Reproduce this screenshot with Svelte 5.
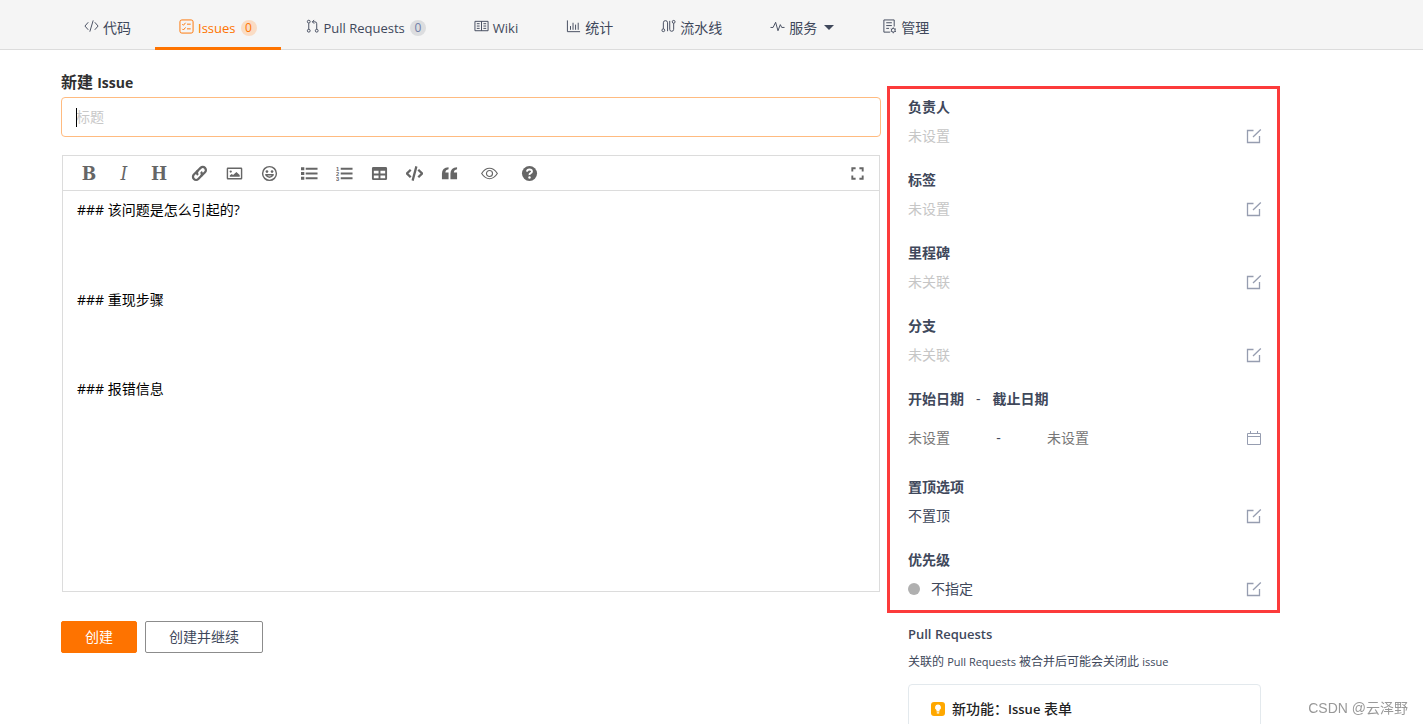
<script>
    let title = '';
    let body = '### 该问题是怎么引起的?\n\n\n\n### 重现步骤\n\n\n\n### 报错信息';

    const tabs = [
        { icon: 'code', text: '代码' },
        { icon: 'issues', text: 'Issues', count: 0, active: true, latin: true },
        { icon: 'pull', text: 'Pull Requests', count: 0, latin: true },
        { icon: 'wiki', text: 'Wiki', latin: true },
        { icon: 'stats', text: '统计' },
        { icon: 'pipeline', text: '流水线' },
        { icon: 'service', text: '服务', caret: true },
        { icon: 'manage', text: '管理' }
    ];

    const tools = [
        ['bold', 'italic', 'heading'],
        ['link', 'image', 'smile'],
        ['ul', 'ol', 'table', 'source', 'quote'],
        ['eye'],
        ['help']
    ];

    const letters = { bold: 'B', italic: 'I', heading: 'H' };

    const fields = [
        { label: '负责人', value: '未设置', empty: true },
        { label: '标签', value: '未设置', empty: true },
        { label: '里程碑', value: '未关联', empty: true },
        { label: '分支', value: '未关联', empty: true },
        { label: '开始日期', range: true },
        { label: '置顶选项', value: '不置顶' },
        { label: '优先级', value: '不指定', dot: true }
    ];
</script>

<div class="page">
    <nav class="tabs">
        {#each tabs as tab}
        <a class="tab" class:active={tab.active} href="#{tab.icon}">
            <svg class="tab-icon" viewBox="0 0 16 16" aria-hidden="true">
                {#if tab.icon === 'code'}
                <path d="M4.500 3.500L1 7.500l3.500 4M11.500 3.500l3.500 4-3.500 4M9.800 1.500L6.200 13.500"/>
                {:else if tab.icon === 'issues'}
                <rect x="1" y="1" width="14" height="14" rx="2"/>
                <path d="M3.500 5.500l1.200 1.200L7 4M8.500 5.500h4M3.500 10.500l1.200 1.200L7 9M8.500 10.500h4"/>
                {:else if tab.icon === 'pull'}
                <circle cx="4" cy="2.800" r="1.500"/><circle cx="4" cy="12.500" r="1.500"/><circle cx="12.500" cy="12.500" r="1.500"/>
                <path d="M4 4.500v6.300M12.500 10.800V5q0-2-2-2H8M9.800 1L7.800 3l2 2"/>
                {:else if tab.icon === 'wiki'}
                <path d="M1 2.500h14v10H1zM8 2.500v10M3 5h3M3 7.500h3M3 10h3M10 5h3M10 7.500h3M10 10h3"/>
                {:else if tab.icon === 'stats'}
                <path d="M1.500 1.500v12H15M4.800 7.500v4M7.500 4v7.500M10.200 6v5.500M13 4v7.500"/>
                {:else if tab.icon === 'pipeline'}
                <circle cx="2.500" cy="12" r="1.500"/><circle cx="13.500" cy="3" r="1.500"/>
                <path d="M2.500 10.500V4a2.250 2.250 0 0 1 4.500 0v9M9.300 2v9a2.100 2.100 0 0 0 4.200 0V4.500"/>
                {:else if tab.icon === 'service'}
                <path d="M.5 9h2.800L6 3.500l2.500 9L11 6l1.500 3h3"/>
                {:else}
                <path d="M8.500 14H2V1h11v7M4.500 4h6M4.500 7h6M4.500 10h3"/>
                <circle cx="12" cy="12" r="2"/><path d="M12 9v1M12 14v1.200M9.300 10.500l1 .5M13.800 13l1 .5M9.300 13.500l1-.5M13.800 11l1-.5"/>
                {/if}
            </svg>
            <span class:latin={tab.latin}>{tab.text}</span>
            {#if tab.count !== undefined}<span class="count">{tab.count}</span>{/if}
            {#if tab.caret}<span class="caret"></span>{/if}
        </a>
        {/each}
    </nav>

    <main class="layout">
        <form class="issue-form" on:submit|preventDefault>
            <h1><label for="title">新建 <span>Issue</span></label></h1>
            <div class="title-box">
                <input id="title" class="title-input" placeholder="标题" autocomplete="off" bind:value={title}>
                <span class="cursor"></span>
            </div>

            <div class="editor">
                <div class="toolbar">
                    {#each tools as group, i}
                    {#if i > 0}<span class="divider"></span>{/if}
                    {#each group as tool}
                    <button type="button" class="tool" aria-label={tool}>
                        {#if letters[tool]}
                        <span class="letter" class:italic={tool === 'italic'}>{letters[tool]}</span>
                        {:else}
                        <svg viewBox="0 0 18 18" aria-hidden="true">
                            {#if tool === 'link'}
                            <g class="line thick" transform="rotate(-45 9 9)">
                                <path d="M10 5.600H4a3.300 3.300 0 0 0 0 6.600h4a3.300 3.300 0 0 0 3.300-3.300"/>
                                <path d="M8 12.200h6a3.300 3.300 0 0 0 0-6.600h-4A3.300 3.300 0 0 0 6.700 9"/>
                            </g>
                            {:else if tool === 'image'}
                            <rect class="line" x="1.500" y="3.500" width="15" height="11" rx=".5"/>
                            <circle cx="5" cy="7" r="1.200"/><path d="M4 12.500v-1.500l2-1.500 1.500 1L11 7.500l3.500 3v2z"/>
                            {:else if tool === 'smile'}
                            <circle class="line" cx="9" cy="9" r="7.300"/>
                            <circle cx="6.300" cy="7" r="1.400"/><circle cx="11.700" cy="7" r="1.400"/>
                            <path class="line" d="M4.500 10.300h9M5 10.300q4 5.200 8 0"/>
                            {:else if tool === 'ul'}
                            <path d="M0 2.300h3.500v3.200H0zM0 7.400h3.500v3.200H0zM0 12.500h3.500v3.200H0zM5 2.800h12.500v2.200H5zM5 7.900h12.500v2.200H5zM5 13h12.500v2.200H5z"/>
                            {:else if tool === 'ol'}
                            <path d="M5 2.800h12.500v2.200H5zM5 7.900h12.500v2.200H5zM5 13h12.500v2.200H5z"/>
                            <text x="0" y="6">1</text><text x="0" y="11.500">2</text><text x="0" y="17">3</text>
                            {:else if tool === 'table'}
                            <path fill-rule="evenodd" d="M2.500 2h13a1.500 1.500 0 0 1 1.500 1.500v11a1.500 1.500 0 0 1-1.500 1.500h-13A1.500 1.500 0 0 1 1 14.500v-11A1.500 1.500 0 0 1 2.500 2zM3 6v3h5V6zM10 6v3h5V6zM3 11v3h5v-3zM10 11v3h5v-3z"/>
                            {:else if tool === 'source'}
                            <path class="line thick" d="M5 5L1 9l4 4M13 5l4 4-4 4M11 1.500L7 16.500"/>
                            {:else if tool === 'quote'}
                            <path d="M8 2.500v2Q4.800 5 4.600 8H8v7H1V9q0-6 7-6.500zM17 2.500v2q-3.200.5-3.400 3.500H17v7h-7V9q0-6 7-6.500z"/>
                            {:else if tool === 'eye'}
                            <path class="line thin" d="M.7 9q3.600-5.500 8.300-5.500T17.300 9Q13.700 14.500 9 14.500T.7 9z"/>
                            <circle class="line thin" cx="9" cy="9" r="3.200"/>
                            {:else}
                            <circle cx="9" cy="9" r="8"/>
                            <path class="cut" d="M6.300 7.100Q6.500 4.800 9 4.800t2.600 2q0 1.200-1.400 1.900T9 10.600"/>
                            <circle class="cut-dot" cx="9" cy="13.200" r="1.300"/>
                            {/if}
                        </svg>
                        {/if}
                    </button>
                    {/each}
                    {/each}
                    <button type="button" class="tool expand" aria-label="fullscreen">
                        <svg viewBox="0 0 18 18" aria-hidden="true">
                            <path class="line corner" d="M3.500 7V3.500H7M11 3.500h3.500V7M14.500 11v3.500H11M7 14.500H3.500V11"/>
                        </svg>
                    </button>
                </div>
                <textarea aria-label="Issue" spellcheck="false" bind:value={body}></textarea>
            </div>

            <div class="actions">
                <button class="btn btn-primary">创建</button>
                <button type="button" class="btn">创建并继续</button>
            </div>
        </form>

        <aside>
            <div class="options">
                {#each fields as field}
                <section class="field" class:range={field.range}>
                    {#if field.range}
                    <h2>{field.label}<span class="dash">-</span>截止日期</h2>
                    {:else}
                    <h2>{field.label}</h2>
                    {/if}
                    <div class="field-row">
                        {#if field.range}
                        <div class="dates"><span>未设置</span><span class="to">-</span><span>未设置</span></div>
                        {:else}
                        <span class="value" class:empty={field.empty}>
                            {#if field.dot}<i class="dot"></i>{/if}{field.value}
                        </span>
                        {/if}
                        <button type="button" class="edit" aria-label={field.label}>
                            <svg viewBox="0 0 16 16" aria-hidden="true">
                                {#if field.range}
                                <path d="M1.500 3.500h13v11h-13zM1.500 6.500h13M4.500 1v3M11.500 1v3"/>
                                {:else}
                                <path class="pen" d="M7.500 2.500h-6v12h12V8M7 9l7.800-7.500"/>
                                {/if}
                            </svg>
                        </button>
                    </div>
                </section>
                {/each}
            </div>

            <section class="related">
                <h2>Pull Requests</h2>
                <p>关联的 <span>Pull Requests</span> 被合并后可能会关闭此 <span>issue</span></p>
                <div class="card">
                    <svg viewBox="0 0 14 14" aria-hidden="true">
                        <rect width="14" height="14" rx="3" fill="#ffa800"/>
                        <path d="M7 2.500a3 3 0 0 0-1.500 5.600V9.500h3V8.100A3 3 0 0 0 7 2.500zM5.800 10.200h2.400v1.300H5.800z" fill="#fff"/>
                    </svg>
                    <strong>新功能：<span>Issue</span> 表单</strong>
                </div>
            </section>
        </aside>
    </main>

    <div class="watermark">CSDN @云泽野</div>
</div>

<style>
:global(body) {
    background: #fff;
}

.page {
    height: 100vh;
    overflow: hidden;
    font-family: "Open Sans", "Noto Sans CJK SC", sans-serif;
    font-size: 14px;
    line-height: 20px;
    color: #40485b;
}

.page :global(*) {
    box-sizing: border-box;
}

h1, h2, p {
    margin: 0;
}

button, input, textarea {
    font-family: inherit;
    font-size: 14px;
}

button {
    cursor: pointer;
}

.tabs {
    display: flex;
    height: 50px;
    padding-left: 60px;
    background: #f5f5f5;
    border-bottom: 1px solid #dcdcdc;
}

.tab {
    display: flex;
    align-items: center;
    height: 50px;
    padding: 8px 24px 0;
    border-bottom: 3px solid transparent;
    color: #40485b;
    text-decoration: none;
    white-space: nowrap;
}

.tab.active {
    color: #fe7300;
    border-bottom-color: #fe7300;
}

.latin {
    font-size: 13px;
}

.tab-icon {
    width: 15px;
    height: 15px;
    margin: 0 4px 2px 0;
    fill: none;
    stroke: currentColor;
}

.count {
    width: 16px;
    height: 16px;
    margin-left: 5px;
    border-radius: 8px;
    background: #dcdddf;
    color: #6f7ea8;
    font-size: 12px;
    line-height: 16px;
    text-align: center;
}

.active .count {
    background: #fadcc4;
    color: #fe7300;
}

.caret {
    margin-left: 7px;
    border: 5px solid transparent;
    border-top-color: currentColor;
    border-bottom: 0;
}

.layout {
    display: grid;
    grid-template-columns: minmax(0, 1fr) 393px;
    gap: 6px;
    padding: 0 143px 0 61px;
}

.issue-form {
    padding-top: 22px;
}

h1 {
    margin-bottom: 4px;
    font-size: 16px;
    line-height: 20px;
    font-weight: 700;
    color: #303030;
}

/* keeps the latin part from growing the heading's line */
h1 label {
    display: block;
    height: 21px;
}

h1 span {
    font-size: 14px;
    line-height: 1;
}

.title-box {
    position: relative;
}

.title-input {
    display: block;
    width: 100%;
    height: 40px;
    padding: 0 14px 2px;
    border: 1px solid #ffbb80;
    border-radius: 4px;
    outline: none;
    color: #40485b;
}

.title-input::placeholder {
    color: #c8c8c8;
}

.cursor {
    position: absolute;
    left: 15px;
    top: 11px;
    width: 1px;
    height: 19px;
    background: #000;
}

.editor {
    margin: 18px 1px 0;
    border: 1px solid #dcdcdc;
}

.toolbar {
    display: flex;
    align-items: center;
    gap: 5px;
    height: 35px;
    padding: 0 7px 0 11px;
    border-bottom: 1px solid #dcdcdc;
}

.tool {
    display: flex;
    align-items: center;
    justify-content: center;
    width: 30px;
    height: 30px;
    padding: 0;
    border: none;
    background: none;
    color: #666;
}

.tool svg {
    width: 17px;
    height: 17px;
    fill: currentColor;
}

.tool text {
    font: bold 6px "Liberation Sans", sans-serif;
}

.letter {
    font: bold 19px/20px "DejaVu Serif Condensed", "DejaVu Serif", serif;
}

.letter.italic {
    font-weight: 400;
    font-style: italic;
}

.line {
    fill: none;
    stroke: currentColor;
    stroke-width: 1.5;
}

.thick {
    stroke-width: 2.4;
}

.corner {
    stroke-width: 2;
}

.thin {
    stroke-width: 1.2;
}

.cut {
    fill: none;
    stroke: #fff;
    stroke-width: 2;
}

.cut-dot {
    fill: #fff;
}

.expand {
    margin-left: auto;
}

textarea {
    display: block;
    width: 100%;
    height: 400px;
    padding: 8px 14px;
    border: none;
    outline: none;
    resize: none;
    line-height: 1.6;
    color: #000;
}

.actions {
    display: flex;
    gap: 8px;
    margin-top: 29px;
}

.btn {
    height: 32px;
    padding: 0 23px 2px;
    border: 1px solid #8c8c8c;
    border-radius: 2px;
    background: #fff;
    color: #40485b;
}

.btn-primary {
    border-color: #fe7300;
    background: #fe7300;
    color: #fff;
}

aside {
    padding-top: 36px;
}

.options {
    padding: 8px 15px 11px 18px;
    border: 3px solid #fc3b3b;
}

h2 {
    font-size: 14px;
    line-height: 20px;
    font-weight: 700;
}

.field + .field {
    margin-top: 24px;
}

.field-row {
    display: flex;
    align-items: center;
    justify-content: space-between;
    height: 20px;
    margin-top: 9px;
}

.range .field-row {
    margin-top: 19px;
}

.field.range + .field {
    margin-top: 29px;
}

.dash {
    margin: 0 12px;
    font-weight: 400;
}

.value {
    display: flex;
    align-items: center;
}

.empty {
    color: #c6c6c6;
}

.dates {
    display: flex;
    color: #777;
}

.to {
    width: 97px;
    text-align: center;
    color: #40485b;
}

.dot {
    width: 12px;
    height: 12px;
    margin-right: 11px;
    border-radius: 50%;
    background: #b0b0b0;
}

.edit {
    display: flex;
    padding: 0;
    border: none;
    background: none;
    color: #969db0;
}

.edit svg {
    width: 16px;
    height: 16px;
    fill: none;
    stroke: currentColor;
}

.edit .pen {
    stroke-width: 1.3;
}

.related {
    padding: 11px 19px 0 21px;
}

.related h2 {
    font-size: 13px;
    font-weight: 600;
}

.related p {
    margin-top: 8px;
    font-size: 12px;
}

.related p span {
    font-size: 11px;
}

.card {
    display: flex;
    align-items: center;
    gap: 7px;
    margin-top: 12px;
    padding: 14px 22px;
    border: 1px solid #e3e9ed;
    border-radius: 4px;
    color: #222;
}

.card svg {
    width: 14px;
    height: 14px;
}

.card strong {
    font-weight: 500;
}

.card strong span {
    font-size: 13px;
    font-weight: 600;
}

.watermark {
    position: fixed;
    right: 15px;
    bottom: 6px;
    font-family: "Liberation Sans", "Noto Sans CJK SC", sans-serif;
    color: #999;
}
</style>
